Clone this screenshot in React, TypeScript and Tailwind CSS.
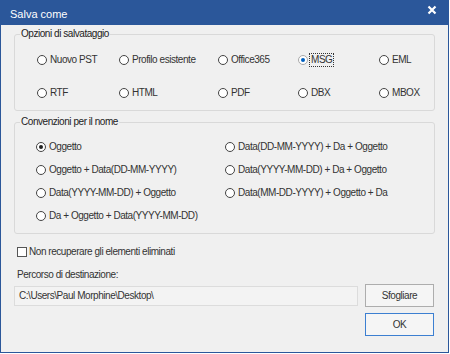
import React from "react";

const FORMATS = [
  ["Nuovo PST", "Profilo esistente", "Office365", "MSG", "EML"],
  ["RTF", "HTML", "PDF", "DBX", "MBOX"],
];

const NAMING_LEFT = [
  "Oggetto",
  "Oggetto + Data(DD-MM-YYYY)",
  "Data(YYYY-MM-DD) + Oggetto",
  "Da + Oggetto + Data(YYYY-MM-DD)",
];

const NAMING_RIGHT = [
  "Data(DD-MM-YYYY) + Da + Oggetto",
  "Data(YYYY-MM-DD) + Da + Oggetto",
  "Data(MM-DD-YYYY) + Oggetto + Da",
];

function Radio({ label, checked, focus }: { label: string; checked?: boolean; focus?: boolean }) {
  return (
    <div className="h-[13px] flex items-center gap-[1px] whitespace-nowrap">
      <span
        className={
          "w-[10px] h-[10px] rounded-full border bg-white flex items-center justify-center shrink-0 " +
          (focus ? "border-[#a8a8a8]" : "border-[#444]")
        }
      >
        {checked && (
          <span className={"w-[4px] h-[4px] rounded-full " + (focus ? "bg-[#0060c0]" : "bg-[#222]")} />
        )}
      </span>
      <span className={focus ? "border border-dotted border-[#333] px-[1px] leading-[12px]" : "px-[2px]"}>
        {label}
      </span>
    </div>
  );
}

export default function App() {
  return (
    <div className="w-[450px] h-[354px] bg-white font-['Liberation_Sans',Arial,sans-serif] text-[10px] tracking-[-0.45px] leading-[14px] text-[#333]">
      <div className="w-[449px] h-[353px] border border-[#2b579a] border-t-0 bg-[#f0f0f0] flex flex-col">
        <div className="h-[25px] shrink-0 bg-[#2b579a] flex justify-between text-white">
          <span className="pl-[9px] pt-[7px] text-[11px] tracking-normal">Salva come</span>
          <svg width="10" height="10" viewBox="0 0 10 10" className="mt-[5px] mr-[11px]">
            <path d="M1.5 1.5 L8.5 8.5 M8.5 1.5 L1.5 8.5" stroke="white" strokeWidth="2.2" />
          </svg>
        </div>

        <div className="flex flex-col px-[13px]">
          <fieldset className="mt-[2px] border border-[#d9d9d9] rounded-[3px] h-[84px]">
            <legend className="ml-[5px] px-[1px] text-[#222]">Opzioni di salvataggio</legend>
            <div className="pl-[22px] pt-[12px] grid grid-cols-[82px_99px_80px_81px_auto] gap-y-[20px]">
              {FORMATS.flat().map((f) => (
                <Radio key={f} label={f} checked={f === "MSG"} focus={f === "MSG"} />
              ))}
            </div>
          </fieldset>

          <fieldset className="mt-[4px] border border-[#d9d9d9] rounded-[3px] h-[119px]">
            <legend className="ml-[5px] px-[1px] text-[#222]">Convenzioni per il nome</legend>
            <div className="pl-[21px] pt-[11px] grid grid-cols-[189px_auto]">
              <div className="flex flex-col gap-[10px]">
                {NAMING_LEFT.map((n) => (
                  <Radio key={n} label={n} checked={n === "Oggetto"} />
                ))}
              </div>
              <div className="flex flex-col gap-[10px]">
                {NAMING_RIGHT.map((n) => (
                  <Radio key={n} label={n} />
                ))}
              </div>
            </div>
          </fieldset>

          <div className="mt-[11px] pl-[3px] h-[14px] flex items-center gap-[2px]">
            <span className="w-[10px] h-[10px] border border-[#555] bg-white" />
            <span>Non recuperare gli elementi eliminati</span>
          </div>

          <div className="mt-[9px] pl-[3px]">Percorso di destinazione:</div>

          <div className="mt-[2px] flex items-start gap-[7px]">
            <div className="mt-[2px] w-[344px] h-[20px] border border-[#dcdcdc] bg-[#f3f3f3] pl-[4px] flex items-center">
              C:\Users\Paul Morphine\Desktop\
            </div>
            <div className="flex flex-col gap-[6px]">
              <button className="w-[69px] h-[23px] border border-[#adadad] bg-[#f5f5f5]">Sfogliare</button>
              <button className="w-[69px] h-[23px] border border-[#3c7fd1] bg-[#f5f5f5]">OK</button>
            </div>
          </div>
        </div>
      </div>
    </div>
  );
}
